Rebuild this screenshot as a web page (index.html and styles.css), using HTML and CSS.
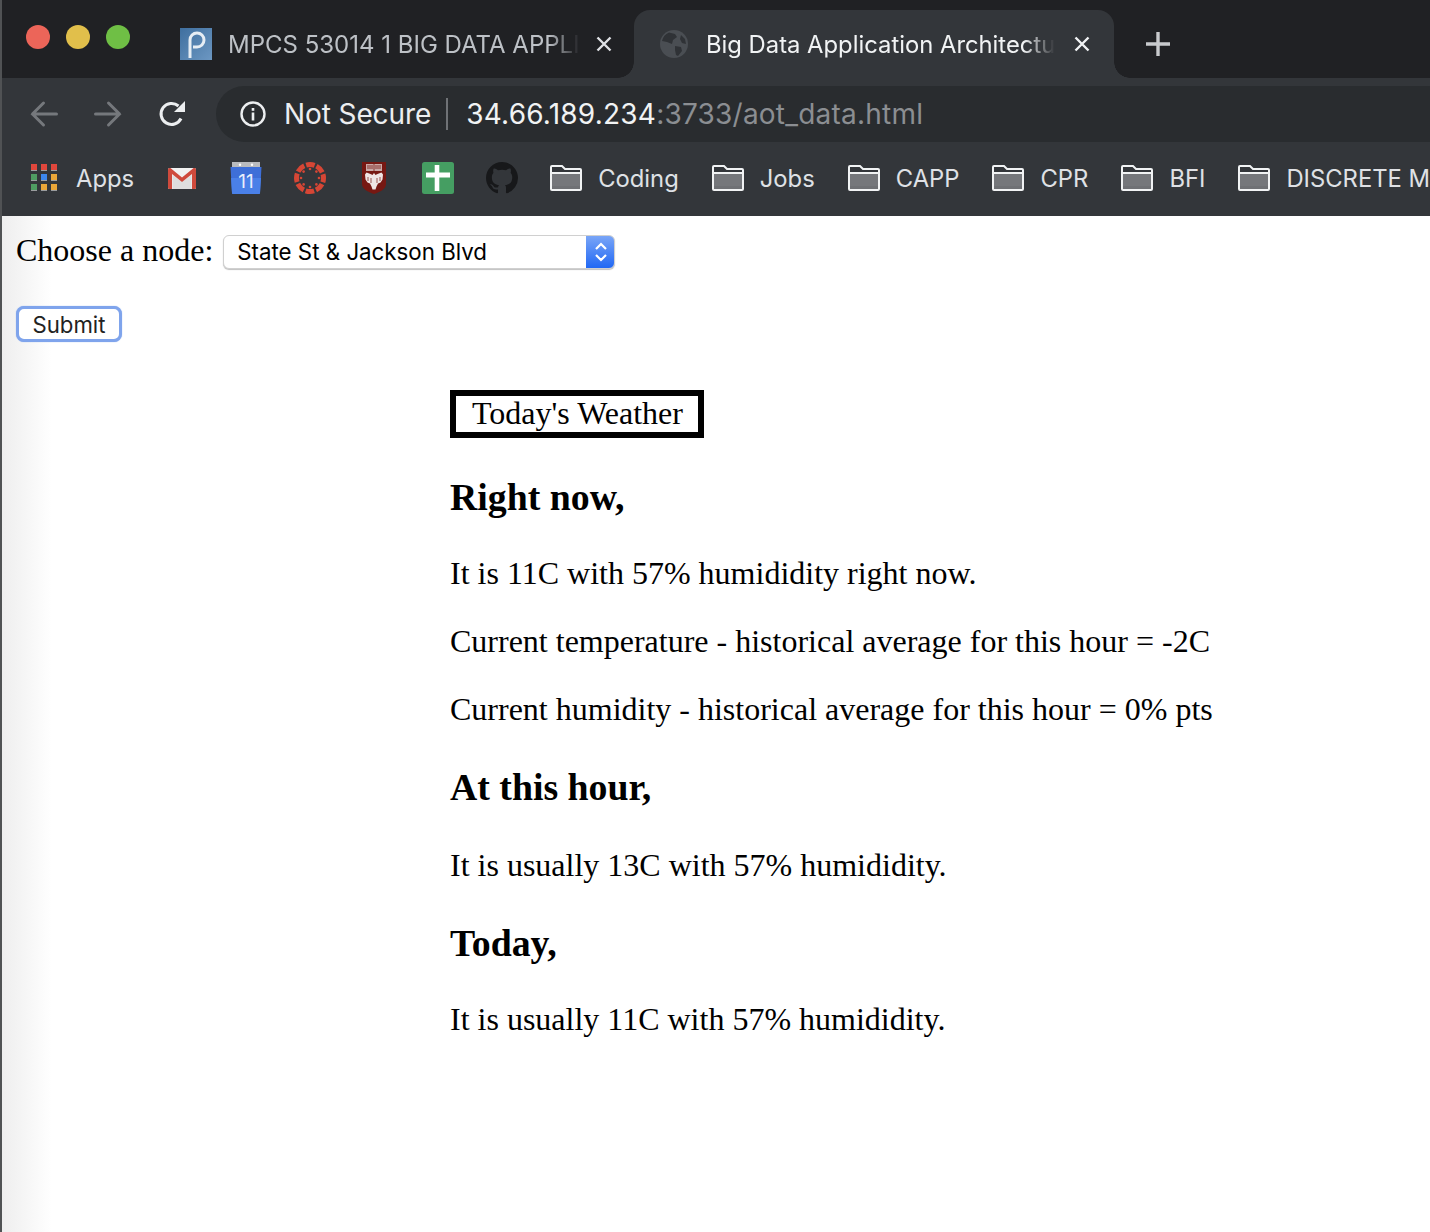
FILE: index.html
```html
<!DOCTYPE html>
<html lang="en">
<head>
<meta charset="UTF-8">
<meta name="viewport" content="width=device-width, initial-scale=1.0">
<title>Big Data Application Architecture</title>
<link rel="stylesheet" href="styles.css">
</head>
<body>

<header class="browser">
    <div class="tabstrip">
        <div class="lights">
            <span class="light red"></span>
            <span class="light yellow"></span>
            <span class="light green"></span>
        </div>
        <div class="tab">
            <svg class="favicon" viewBox="0 0 32 32">
                <defs>
                    <linearGradient id="pblue" x1="0" y1="0" x2="1" y2="1">
                        <stop offset="0" stop-color="#3f6f9f"/>
                        <stop offset="1" stop-color="#6c97c2"/>
                    </linearGradient>
                </defs>
                <rect width="32" height="32" fill="url(#pblue)"/>
                <path d="M10 30V12a7 7 0 1 1 7 7H13" fill="none" stroke="#e6edf4" stroke-width="3"/>
            </svg>
            <span class="tab-title">MPCS 53014 1 BIG DATA APPLI</span>
            <svg class="tab-close" viewBox="0 0 16 16"><path d="M1.500 1.500l13 13M14.500 1.500l-13 13" stroke="#dfe1e5" stroke-width="2.400"/></svg>
        </div>
        <div class="tab active">
            <svg class="favicon globe" viewBox="0 0 28 28">
                <circle cx="14" cy="14" r="14" fill="#4a4e53"/>
                <path d="M9 2.500l6 1.500 2 3-4 3-1 4-5-2-5-1a12 12 0 0 1 7-8.500zM15 16l6 1 1 4-4 5-2-1-1-5zM21 5l4 4 1 5-4-1-2-4z" fill="#2f3236"/>
            </svg>
            <span class="tab-title">Big Data Application Architectu</span>
            <svg class="tab-close" viewBox="0 0 16 16"><path d="M1.500 1.500l13 13M14.500 1.500l-13 13" stroke="#f1f3f4" stroke-width="2.400"/></svg>
        </div>
        <svg class="new-tab" viewBox="0 0 24 24"><path d="M12 0v24M0 12h24" stroke="#c8cacd" stroke-width="3.400"/></svg>
    </div>

    <div class="toolbar">
        <svg class="nav-icon" viewBox="0 0 28 28"><path d="M26.500 14H2.500M13.500 3L2.500 14l11 11" fill="none" stroke="#75787c" stroke-width="3" stroke-linecap="round"/></svg>
        <svg class="nav-icon" viewBox="0 0 28 28"><path d="M1.500 14h24M14.500 3l11 11-11 11" fill="none" stroke="#75787c" stroke-width="3" stroke-linecap="round"/></svg>
        <svg class="nav-icon reload" viewBox="0 0 28 28">
            <path d="M23 18.500A10.500 10.500 0 1 1 20.500 6" fill="none" stroke="#eceef0" stroke-width="3"/>
            <path d="M27 1v11H16z" fill="#eceef0"/>
        </svg>
        <div class="omnibox">
            <svg class="info" viewBox="0 0 26 26">
                <circle cx="13" cy="13" r="11.500" fill="none" stroke="#eceef0" stroke-width="2.400"/>
                <rect x="11.700" y="11.500" width="2.600" height="8" fill="#eceef0"/>
                <rect x="11.700" y="7" width="2.600" height="2.800" fill="#eceef0"/>
            </svg>
            <span class="not-secure">Not Secure</span>
            <span class="divider"></span>
            <span class="url">34.66.189.234<span class="url-rest">:3733/aot_data.html</span></span>
        </div>
    </div>

    <nav class="bookmarks">
        <div class="bookmark apps">
            <svg class="bm-icon" viewBox="0 0 32 32">
                <rect x="3" y="2" width="6" height="6" fill="#e0473c"/><rect x="13" y="2" width="6" height="6" fill="#e0473c"/><rect x="23" y="2" width="6" height="6" fill="#e0473c"/>
                <rect x="3" y="12" width="6" height="6" fill="#4f9d62"/><rect x="13" y="12" width="6" height="6" fill="#3c87ee"/><rect x="23" y="12" width="6" height="6" fill="#eaa638"/>
                <rect x="3" y="22" width="6" height="6" fill="#4f9d62"/><rect x="13" y="22" width="6" height="6" fill="#eaa638"/><rect x="23" y="22" width="6" height="6" fill="#eaa638"/>
                <path d="M3 8.500h6M13 8.500h6M23 8.500h6M3 18.500h6M13 18.500h6M23 18.500h6M3 28.500h6M13 28.500h6M23 28.500h6" stroke="#9a9c9e" stroke-width="1"/>
            </svg>
            <span>Apps</span>
        </div>
        <svg class="bm-icon" viewBox="0 0 32 32">
            <rect x="2" y="6" width="28" height="21" rx="1.500" fill="#f1f1f1"/>
            <path d="M6.500 27V13l9.500 7 9.500-7v14z" fill="#dedede"/>
            <path d="M2 8C2 6 4 5.500 5 6.500L16 15.500 27 6.500C28 5.500 30 6 30 8V25.500a1.500 1.500 0 0 1-1.500 1.500H26V12l-10 8-10-8v15H3.500A1.500 1.500 0 0 1 2 25.500z" fill="#cf4a3c"/>
        </svg>
        <svg class="bm-icon" viewBox="0 0 32 32">
            <path d="M2 0h28v6H2z" fill="#b9bbbe"/>
            <circle cx="10" cy="2.800" r="1.200" fill="#fff"/><circle cx="22" cy="2.800" r="1.200" fill="#fff"/>
            <path d="M0.500 5h31l-1.500 26a1 1 0 0 1-1 1H3a1 1 0 0 1-1-1z" fill="#3e6fd8"/>
            <path d="M1 16h30L30 31a1 1 0 0 1-1 1H3a1 1 0 0 1-1-1z" fill="#4a80e8"/>
            <text x="16" y="25.500" class="cal-day">11</text>
        </svg>
        <svg class="bm-icon" viewBox="0 0 32 32">
            <circle cx="16" cy="16" r="13.500" fill="none" stroke="#d64635" stroke-width="5" stroke-dasharray="8.600 2" stroke-dashoffset="4.300"/>
            <g fill="#d64635">
                <circle cx="16" cy="7" r="1.300"/><circle cx="16" cy="25" r="1.300"/>
                <circle cx="7" cy="16" r="1.300"/><circle cx="25" cy="16" r="1.300"/>
                <circle cx="9.600" cy="9.600" r="1.300"/><circle cx="22.400" cy="9.600" r="1.300"/>
                <circle cx="9.600" cy="22.400" r="1.300"/><circle cx="22.400" cy="22.400" r="1.300"/>
            </g>
        </svg>
        <svg class="bm-icon" viewBox="0 0 32 32">
            <path d="M4 0h24v22c0 5-6 8-12 10C10 30 4 27 4 22z" fill="#761812"/>
            <path d="M8 2h16v7H8z" fill="#c9a9a6"/>
            <path d="M9 4h6M17 4h6M9 6h6M17 6h6M16 2v7" stroke="#761812" stroke-width="0.800"/>
            <path d="M16 11l1.500 2 2-1 4-1.500 1.500 2-.5 5-2 3-2.500 1-1.500 3-1 3h-3l-1-3-1.500-3-2.500-1-2-3-.5-5 1.500-2 4 1.500 2 1z" fill="#efe6e5"/>
            <path d="M10 15v4M13 16v5M22 15v4M19 16v5" stroke="#761812" stroke-width="0.700"/>
        </svg>
        <svg class="bm-icon" viewBox="0 0 32 32">
            <rect width="32" height="32" rx="2.500" fill="#459e62"/>
            <path d="M4 10.500h24v5H4zM12.700 3h4.600v26h-4.600z" fill="#fff"/>
        </svg>
        <svg class="bm-icon" viewBox="0 0 16 16">
            <path fill="#17181a" d="M8 0C3.580 0 0 3.580 0 8c0 3.540 2.290 6.530 5.470 7.590.4.070.55-.17.55-.38 0-.19-.01-.82-.01-1.490-2.010.37-2.530-.49-2.690-.94-.09-.23-.48-.94-.82-1.130-.28-.15-.68-.52-.01-.53.63-.01 1.080.58 1.230.82.72 1.210 1.870.87 2.330.66.07-.52.28-.87.51-1.070-1.780-.2-3.640-.89-3.640-3.950 0-.87.31-1.590.82-2.150-.08-.2-.36-1.020.08-2.120 0 0 .67-.21 2.200.82.64-.18 1.320-.27 2-.27.68 0 1.360.09 2 .27 1.530-1.040 2.200-.82 2.200-.82.44 1.100.16 1.920.08 2.120.51.56.82 1.270.82 2.150 0 3.070-1.870 3.750-3.650 3.950.29.25.54.73.54 1.480 0 1.070-.01 1.930-.01 2.200 0 .21.15.46.55.38A8.013 8.013 0 0016 8c0-4.420-3.580-8-8-8z"/>
        </svg>
        <div class="bookmark"><svg class="folder" viewBox="0 0 32 26"><use href="#folder-shape"/></svg><span>Coding</span></div>
        <div class="bookmark"><svg class="folder" viewBox="0 0 32 26"><use href="#folder-shape"/></svg><span>Jobs</span></div>
        <div class="bookmark"><svg class="folder" viewBox="0 0 32 26"><use href="#folder-shape"/></svg><span>CAPP</span></div>
        <div class="bookmark"><svg class="folder" viewBox="0 0 32 26"><use href="#folder-shape"/></svg><span>CPR</span></div>
        <div class="bookmark"><svg class="folder" viewBox="0 0 32 26"><use href="#folder-shape"/></svg><span>BFI</span></div>
        <div class="bookmark"><svg class="folder" viewBox="0 0 32 26"><use href="#folder-shape"/></svg><span>DISCRETE M</span></div>
    </nav>
    <svg class="defs" width="0" height="0">
        <g id="folder-shape">
            <path d="M1.500 8h29v16a1 1 0 0 1-1 1h-27a1 1 0 0 1-1-1z" fill="#6f7175"/>
            <path d="M1.500 8h29v13h-29z" fill="#75777b"/>
            <path d="M1 24V2a1 1 0 0 1 1-1h10l3 3h15a1 1 0 0 1 1 1v19a1 1 0 0 1-1 1H2a1 1 0 0 1-1-1zM1 8h30" fill="none" stroke="#f1f3f4" stroke-width="2"/>
        </g>
    </svg>
</header>

<main class="page">
    <form class="node-form">
        <div class="node-row">
            <label for="node">Choose a node:</label>
            <div class="select-wrap">
                <select id="node" class="node-select">
                    <option>State St &amp; Jackson Blvd</option>
                </select>
                <svg class="select-arrows" viewBox="0 0 16 24"><path d="M3 9l5-5 5 5M3 15l5 5 5-5" fill="none" stroke="#fff" stroke-width="2.200"/></svg>
            </div>
        </div>
        <button type="button" class="submit">Submit</button>
    </form>

    <section class="weather">
        <div class="weather-title">Today's Weather</div>
        <h3 class="h-now">Right now,</h3>
        <p>It is 11C with 57% humididity right now.</p>
        <p>Current temperature - historical average for this hour = -2C</p>
        <p>Current humidity - historical average for this hour = 0% pts</p>
        <h3 class="h-hour">At this hour,</h3>
        <p>It is usually 13C with 57% humididity.</p>
        <h3 class="h-today">Today,</h3>
        <p>It is usually 11C with 57% humididity.</p>
    </section>
</main>

</body>
</html>
```

FILE: styles.css
```css
html, body {
    margin: 0;
    padding: 0;
}
body {
    min-height: 100vh;
    box-sizing: border-box;
    display: flex;
    flex-direction: column;
    overflow: hidden;
    background-color: #fff;
    border-left: 2px solid #505254;
}

/* browser chrome */
.browser {
    font-family: Inter, "Liberation Sans", sans-serif;
    color: #e8eaed;
    background-color: #33363a;
    flex: none;
}
.defs {
    position: absolute;
}
.tabstrip {
    height: 78px;
    display: flex;
    align-items: flex-end;
    background-color: #202124;
}
.lights {
    width: 152px;
    height: 78px;
    padding: 25px 0 0 24px;
    box-sizing: border-box;
    display: flex;
    align-items: flex-start;
    gap: 16px;
}
.light {
    width: 24px;
    height: 24px;
    border-radius: 50%;
}
.red { background-color: #ec6559; }
.yellow { background-color: #e1bf4b; }
.green { background-color: #6fbf45; }
.tab {
    width: 480px;
    height: 68px;
    box-sizing: border-box;
    padding: 0 22px 0 26px;
    display: flex;
    align-items: center;
    gap: 16px;
    font-size: 24px;
    color: #bdc1c6;
    position: relative;
}
.tab.active {
    background-color: #33363a;
    border-radius: 16px 16px 0 0;
    color: #f1f3f4;
    font-size: 23.800px;
    padding-right: 24px;
    gap: 18px;
}
.tab.active::before,
.tab.active::after {
    content: "";
    position: absolute;
    bottom: 0;
    width: 16px;
    height: 16px;
}
.tab.active::before {
    left: -16px;
    background: radial-gradient(circle at 0 0, transparent 15.500px, #33363a 16px);
}
.tab.active::after {
    right: -16px;
    background: radial-gradient(circle at 100% 0, transparent 15.500px, #33363a 16px);
}
.favicon {
    width: 32px;
    height: 32px;
    flex: none;
}
.globe {
    width: 28px;
    height: 28px;
}
.tab-title {
    flex: none;
    white-space: nowrap;
    -webkit-mask-image: linear-gradient(to right, #000 91%, transparent 100%);
    mask-image: linear-gradient(to right, #000 91%, transparent 100%);
}
.tab-close {
    width: 16px;
    height: 16px;
    flex: none;
    margin-left: auto;
}
.new-tab {
    width: 24px;
    height: 24px;
    margin: 0 0 22px 32px;
}

.toolbar {
    height: 64px;
    display: flex;
    align-items: flex-end;
    padding-left: 28px;
    background-color: #33363a;
}
.nav-icon {
    width: 28px;
    height: 28px;
    margin: 0 36px 14px 0;
    flex: none;
}
.reload {
    margin-right: 30px;
}
.omnibox {
    flex: 1;
    height: 56px;
    border-radius: 28px 0 0 28px;
    background-color: #292c2f;
    display: flex;
    align-items: center;
    padding-left: 24px;
    font-size: 28px;
    white-space: nowrap;
}
.info {
    width: 26px;
    height: 26px;
    margin-right: 18px;
    flex: none;
}
.not-secure {
    color: #eceef0;
    letter-spacing: -0.100px;
}
.divider {
    width: 2px;
    height: 32px;
    margin: 0 18px 0 15px;
    background-color: #6f7276;
}
.url {
    color: #f1f3f4;
    letter-spacing: 0.220px;
}
.url-rest {
    color: #8b8e92;
}

.bookmarks {
    height: 74px;
    box-sizing: border-box;
    padding: 0 0 2px 26px;
    display: flex;
    align-items: center;
    gap: 32px;
    font-size: 23.800px;
    color: #dfe1e5;
    overflow: hidden;
    white-space: nowrap;
}
.bookmark {
    display: flex;
    align-items: center;
    gap: 16px;
    flex: none;
}
.bookmark + .bookmark {
    margin-left: 1px;
}
.bm-icon {
    width: 32px;
    height: 32px;
    flex: none;
}
.folder {
    width: 32px;
    height: 26px;
    flex: none;
}
.cal-day {
    font-family: Inter, "Liberation Sans", sans-serif;
    font-size: 19px;
    fill: #e8eefc;
    text-anchor: middle;
}

/* the page itself */
.page {
    flex: 1;
    font-family: "Liberation Serif", serif;
    font-size: 32px;
    color: #000;
    padding: 15px 14px 0;
    background: linear-gradient(to right, #eeeeee 0, #ffffff 50px);
}
.node-row {
    display: flex;
    align-items: flex-start;
    height: 38px;
}
.node-row label {
    line-height: 38px;
}
.select-wrap {
    position: relative;
    margin: 4px 0 0 10px;
    width: 392px;
    height: 34px;
}
.node-select {
    -webkit-appearance: none;
    appearance: none;
    display: block;
    width: 100%;
    height: 100%;
    padding: 0 0 2px 13px;
    border: 1px solid #d0d0d0;
    border-radius: 6px;
    box-shadow: 0 1px 1px rgba(0, 0, 0, 0.25);
    font-family: Inter, "Liberation Sans", sans-serif;
    font-size: 22.300px;
    color: #000;
    background: linear-gradient(#79a5f7, #2168f4) right / 28px 100% no-repeat #fff;
}
.select-arrows {
    position: absolute;
    top: 5px;
    right: 6px;
    width: 16px;
    height: 24px;
}
.submit {
    display: block;
    width: 106px;
    height: 36px;
    margin-top: 37px;
    padding: 0;
    border: 3px solid #7fa4ec;
    border-radius: 8px;
    box-shadow: 0 0 1px #7fa4ec;
    background-color: #fff;
    font-family: Inter, "Liberation Sans", sans-serif;
    font-size: 22.200px;
    color: #222;
}
.weather {
    margin-left: 434px;
    margin-top: 48px;
}
.weather-title {
    display: inline-block;
    padding: 0 15px 2px 16px;
    border: 6px solid #000;
    line-height: 34px;
    vertical-align: top;
}
h3 {
    font-size: 37.800px;
    line-height: 43px;
    margin: 1em 0;
}
.h-now {
    margin-bottom: 35.800px;
}
.h-hour {
    margin-top: 39.800px;
}
.h-today {
    margin-top: 38.800px;
    margin-bottom: 35.800px;
}
p {
    margin: 32px 0;
    line-height: 36px;
}
```
